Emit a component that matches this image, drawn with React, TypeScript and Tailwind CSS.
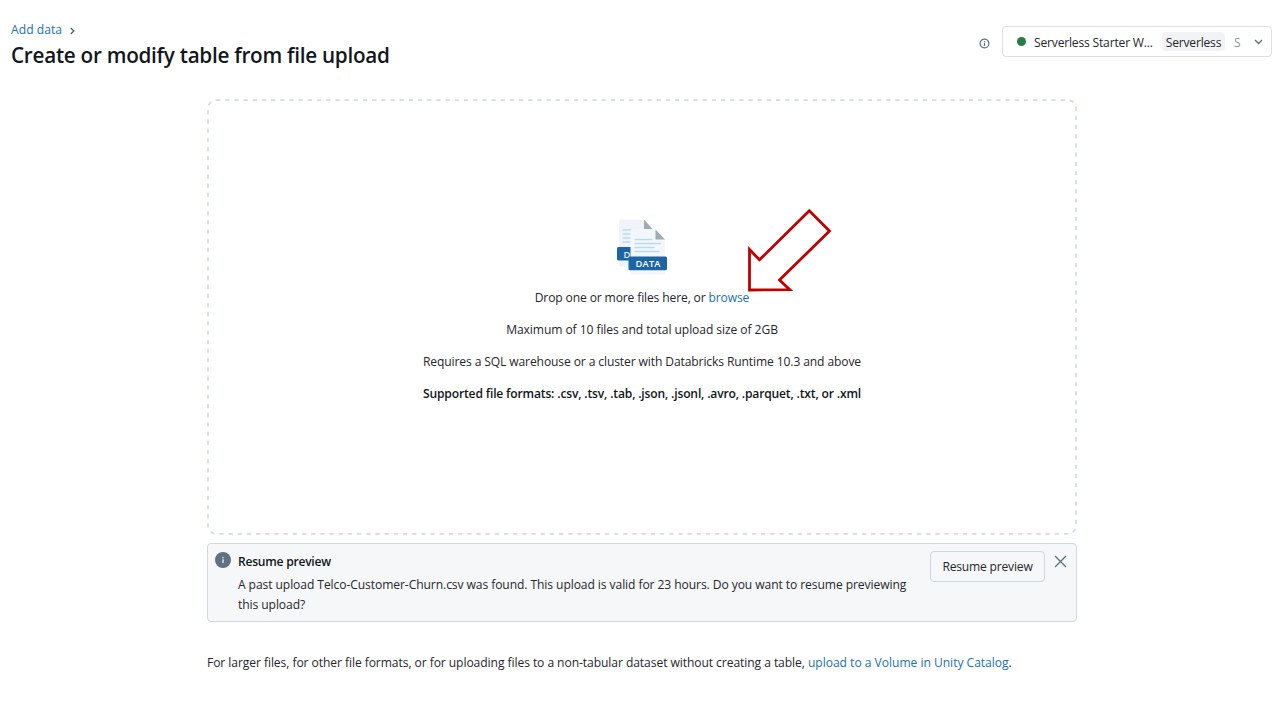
import React from "react";

function FilesIcon() {
  return (
    <svg width="52" height="58" viewBox="616 218 52 58" className="block" aria-hidden="true">
      <path d="M621 219.500h23l8.500 9.500v37.500H621a2 2 0 0 1-2-2v-43a2 2 0 0 1 2-2Z" fill="#f0f4f8" />
      <path d="M644 219.500v9.500h8.500Z" fill="#9eabb6" />
      <path d="M622.500 230h9M622.500 234h8M622.500 238h8M622.500 242h8" stroke="#b9dcf8" strokeWidth="1.700" />
      <rect x="617" y="247" width="30" height="13.500" rx="1.500" fill="#1d64a5" />
      <text x="623.500" y="257.500" fill="#dcebf7" fontSize="9.500" fontWeight="600" fontFamily="'Open Sans', sans-serif">D</text>
      <path d="M632 229.500h23.500l9.500 10v35h-33a1.500 1.500 0 0 1-1.500-1.500v-42a1.500 1.500 0 0 1 1.500-1.500Z" fill="#f4f7fa" />
      <path d="M655.500 229.500v10h9.500Z" fill="#9eabb6" />
      <path d="M634.500 239.500h18M634.500 243.500h26.500M634.500 247.500h20M634.500 251.500h25" stroke="#b5dbfa" strokeWidth="1.700" />
      <rect x="628.500" y="256.500" width="38.500" height="13.700" rx="1.500" fill="#1d64a5" />
      <text x="635.500" y="267" fill="#fff" fontSize="9.300" fontWeight="600" textLength="25" fontFamily="'Open Sans', sans-serif">DATA</text>
    </svg>
  );
}

function Header() {
  return (
    <header className="flex h-[99px] items-start justify-between pl-[11px] pr-2">
      <div className="pt-[21px]">
        <nav className="flex h-[18px] items-center text-[#2272b4]">
          <a className="tracking-[0.05px]">Add data</a>
          <svg width="5" height="8" viewBox="0 0 5 8" className="ml-2 mt-px" fill="none" stroke="#4d5f6c" strokeWidth="1.300">
            <path d="m.8 1 3 3-3 3" />
          </svg>
        </nav>
        <h1 className="text-[20.700px] font-semibold leading-8 tracking-[-0.270px] text-[#11171c]">Create or modify table from file upload</h1>
      </div>
      <div className="flex items-center pt-[26px]">
        <svg width="11" height="11" viewBox="0 0 11 11" className="mr-3 mt-1" fill="none" stroke="#5f7281">
          <circle cx="5.500" cy="5.500" r="4.400" strokeWidth="1.200" />
          <path d="M5.500 5V8M5.500 3V4.200" strokeWidth="1.200" />
        </svg>
        <div className="flex h-[31px] w-[270px] items-center rounded border border-[#d9e0e7] pl-[14px]">
          <span className="size-[9px] rounded-full bg-[#277c43]" />
          <span className="ml-2 mt-[3px] w-[128px] whitespace-nowrap tracking-[-0.190px]">Serverless Starter W...</span>
          <span className="flex h-[19px] w-[63px] items-center justify-center rounded bg-[#f2f3f5] pt-[3px] tracking-[-0.200px]">Serverless</span>
          <span className="ml-[9px] mt-[3px] w-[20px] text-[#8396a5]">S</span>
          <svg width="9" height="6" viewBox="0 0 9 6" fill="none" stroke="#5f7281" strokeWidth="1.400">
            <path d="m1 1 3.500 3.500L8 1" />
          </svg>
        </div>
      </div>
    </header>
  );
}

function DropZone() {
  return (
    <section className="relative flex h-[436px] flex-col items-center pt-[119px]">
      <svg width="870" height="436" viewBox="0 0 870 436" className="absolute left-0 top-0" fill="none" aria-hidden="true">
        <rect x="1" y="1.200" width="868" height="433.600" rx="8" stroke="#d3dce4" strokeWidth="1.700" strokeDasharray="4.300 4.880" />
      </svg>
      <FilesIcon />
      <div className="mt-[12px] flex flex-col items-center gap-[13px] whitespace-nowrap leading-[19px]">
        <p className="tracking-[-0.140px]">Drop one or more files here, or <a className="text-[#2272b4]">browse</a></p>
        <p className="tracking-[-0.080px]">Maximum of 10 files and total upload size of 2GB</p>
        <p className="tracking-[-0.120px]">Requires a SQL warehouse or a cluster with Databricks Runtime 10.3 and above</p>
        <p className="font-semibold tracking-[-0.170px] text-[#11171c]">Supported file formats: .csv, .tsv, .tab, .json, .jsonl, .avro, .parquet, .txt, or .xml</p>
      </div>
      <svg width="90" height="90" viewBox="745 205 90 90" className="absolute left-[538px] top-[106px]" fill="none" stroke="#c00000" strokeWidth="2.800" aria-hidden="true">
        <path d="M809.300 210.800 829.500 231l-50 49 10.300 9.700-40.300.300V249.500l10 10.300Z" />
      </svg>
    </section>
  );
}

function ResumeAlert() {
  return (
    <section className="mt-2 flex h-[79px] items-start rounded border border-[#cfd9e2] bg-[#f6f7f9] pl-[7px] pt-[7px]">
      <span className="mt-px flex size-4 items-center justify-center rounded-full bg-[#5f7281]">
        <svg width="4" height="8" viewBox="0 0 4 8" stroke="#fff" strokeWidth="1.200">
          <path d="M2 3.200V7M2 1v1.200" />
        </svg>
      </span>
      <div className="ml-[7px] mt-px w-[692px]">
        <h2 className="h-[23px] font-semibold leading-[20px] tracking-[-0.250px] text-[#11171c]">Resume preview</h2>
        <p className="whitespace-nowrap leading-[19.500px] tracking-[-0.087px]">
          A past upload Telco-Customer-Churn.csv was found. This upload is valid for 23 hours. Do you want to resume previewing
          <br />
          this upload?
        </p>
      </div>
      <button className="h-[31px] w-[115px] whitespace-nowrap rounded border border-[#cbd6e0] pt-0.5 tracking-[-0.200px]">Resume preview</button>
      <svg width="13" height="13" viewBox="0 0 13 13" className="ml-[9px] mt-[4px]" stroke="#5f7281" strokeWidth="1.400">
        <path d="m1 1 11 11M12 1 1 12" />
      </svg>
    </section>
  );
}

export default function App() {
  return (
    <div className="h-[720px] w-[1280px] overflow-hidden bg-white font-['Open_Sans','Noto_Sans',sans-serif] text-[12.100px] text-[#1f272d]">
      <Header />
      <main className="ml-[207px] w-[870px]">
        <DropZone />
        <ResumeAlert />
        <p className="mt-[31px] whitespace-nowrap leading-[19px] tracking-[-0.076px]">
          For larger files, for other file formats, or for uploading files to a non-tabular dataset without creating a table,{" "}
          <a className="tracking-[-0.030px] text-[#2272b4]">upload to a Volume in Unity Catalog</a>.
        </p>
      </main>
    </div>
  );
}
